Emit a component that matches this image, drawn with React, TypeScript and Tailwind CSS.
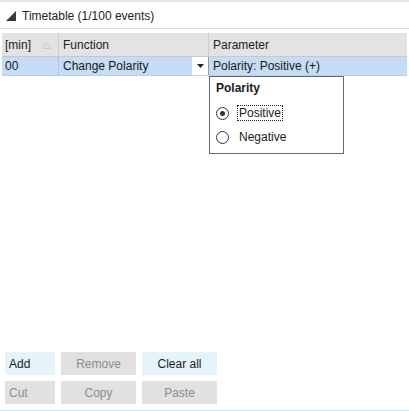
import React from "react";

const cols = ["w-[57px]", "w-[150px]", "flex-1"];

function SortGlyph() {
  return (
    <svg width="9" height="7" viewBox="0 0 9 7" className="absolute right-[7px] top-[9px]">
      <path d="M4.5 0.5 L8.5 6.5 L0.5 6.5 Z" fill="none" stroke="#c8c8c8" strokeWidth="1" />
    </svg>
  );
}

function Radio({ checked, label, focused }: { checked?: boolean; label: string; focused?: boolean }) {
  return (
    <div className="flex items-center h-[24px] pl-[6px]">
      <span className="w-[13px] h-[13px] rounded-full border border-[#333] bg-white flex items-center justify-center">
        {checked && <span className="w-[5px] h-[5px] rounded-full bg-[#333]" />}
      </span>
      <span
        className={
          "leading-[14px] text-[#1a1a1a] " +
          (focused ? "outline outline-1 outline-dotted outline-[#222] px-[1px] ml-[9px]" : "ml-[10px]")
        }
      >
        {label}
      </span>
    </div>
  );
}

function Btn({ label, active, left }: { label: string; active?: boolean; left?: boolean }) {
  return (
    <div
      className={
        "h-[23px] flex items-center " +
        (left ? "justify-start pl-[4px] " : "justify-center ") +
        (active ? "bg-[#e5f3fb] text-[#1a1a1a]" : "bg-[#e1e1e1] text-[#8c8c8c]")
      }
    >
      {label}
    </div>
  );
}

export default function App() {
  return (
    <div
      className="w-[409px] h-[411px] bg-white relative overflow-hidden flex flex-col text-[12px] text-[#1a1a1a]"
      style={{ fontFamily: '"Liberation Sans", Arial, sans-serif' }}
    >
      {/* Title bar */}
      <div className="h-[2px] bg-[#e6e6e6]" />
      <div className="h-[27px] flex items-center border-b border-[#dcdcdc] pl-[6px] pt-[2px]">
        <svg width="10" height="10" viewBox="0 0 10 10">
          <path d="M10 0 L10 10 L0 10 Z" fill="#3a3a3a" />
        </svg>
        <span className="ml-[6px] text-[12px] text-[#222]">Timetable (1/100 events)</span>
      </div>

      {/* Table */}
      <div className="mt-[4px] ml-[2px] mr-[2px] flex flex-col">
        <div className="h-[24px] flex bg-[#e3e3e3] border-b border-[#c8c8c8] text-[#222]">
          <div className={cols[0] + " relative flex items-center pl-[3px] border-r border-[#cfcfcf]"}>
            [min]
            <SortGlyph />
          </div>
          <div className={cols[1] + " flex items-center pl-[4px] border-r border-[#cfcfcf]"}>Function</div>
          <div className={cols[2] + " flex items-center pl-[4px]"}>Parameter</div>
        </div>
        <div className="h-[19px] flex bg-[#c4dcf4] border-b border-dotted border-[#a9c4e0]">
          <div className={cols[0] + " flex items-center pl-[3px] border-r border-dotted border-[#9db8d6]"}>00</div>
          <div className={cols[1] + " flex items-center pl-[4px] border-r border-[#9a9a9a]"}>
            <span className="flex-1">Change Polarity</span>
            <span className="w-[16px] h-full bg-white flex items-center justify-center">
              <svg width="7" height="4" viewBox="0 0 7 4">
                <path d="M0 0 L7 0 L3.5 4 Z" fill="#222" />
              </svg>
            </span>
          </div>
          <div className={cols[2] + " flex items-center pl-[4px]"}>Polarity: Positive (+)</div>
        </div>
      </div>

      {/* Parameter popup */}
      <div className="absolute left-[209px] top-[76px] w-[135px] h-[78px] bg-white border border-[#666] flex flex-col">
        <div className="font-bold pl-[6px] h-[21px] flex items-center">Polarity</div>
        <div className="mt-[3px]">
          <Radio checked label="Positive" focused />
          <Radio label="Negative" />
        </div>
      </div>

      <div className="flex-1" />

      {/* Buttons */}
      <div className="grid grid-cols-[50px_75px_75px] gap-x-[6px] gap-y-[6px] pl-[5px] pb-[6px]">
        <Btn label="Add" active left />
        <Btn label="Remove" />
        <Btn label="Clear all" active />
        <Btn label="Cut" left />
        <Btn label="Copy" />
        <Btn label="Paste" />
      </div>
      <div className="h-[1px] bg-[#cfe3f3]" />
    </div>
  );
}
